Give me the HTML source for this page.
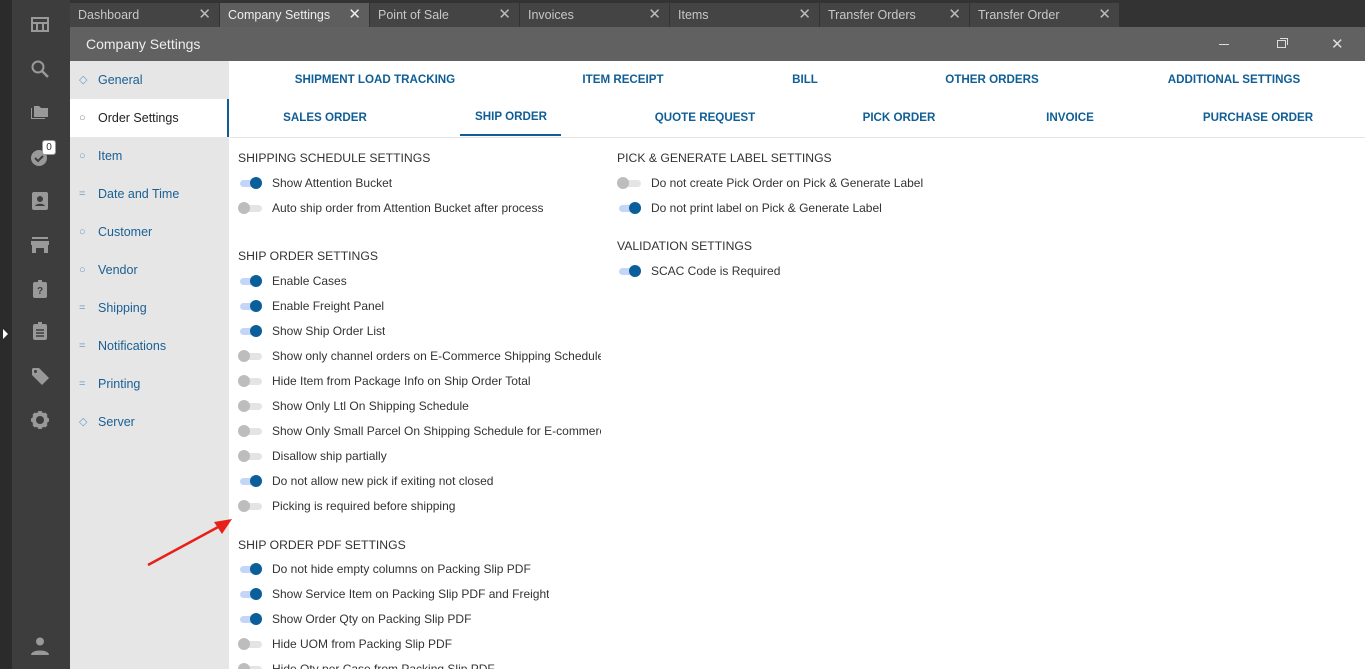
<!DOCTYPE html>
<html style="overflow:hidden"><head><meta charset="utf-8"><style>
*{margin:0;padding:0;box-sizing:border-box}
html,body{width:1365px;height:669px;overflow:hidden}
body{position:relative;background:#fff;font-family:"Liberation Sans",sans-serif}
.a{position:absolute}
.tab{position:absolute;top:3px;height:24px;width:149px;background:#444;color:#c8c8c8;font-size:12.5px;line-height:24px;padding-left:8px}
.tab .x{position:absolute;right:8px;top:0;font-size:15px;color:#bbb;font-weight:300}
.nav{position:absolute;left:70px;width:159px;height:38px;line-height:38px;font-size:12.5px;color:#1a5f93;padding-left:28px}
.nav i{position:absolute;left:9px;top:0;font-style:normal;color:#6a9cc6;font-size:11px}
.tb{position:absolute;font-size:11.6px;font-weight:bold;color:#0f5e96;transform:translateX(-50%);white-space:nowrap}
.h{position:absolute;font-size:12.2px;color:#333;white-space:nowrap}
.r{position:absolute;height:20px;font-size:12px;color:#333;white-space:nowrap;overflow:hidden;line-height:20px;padding-left:34px}
.r:before{content:"";position:absolute;left:2px;top:7px;width:22px;height:7px;border-radius:4px;background:#e4e4e4}
.r:after{content:"";position:absolute;left:0;top:4px;width:12px;height:12px;border-radius:50%;background:#bdbdbd}
.r.on:before{background:#c4d6f7}
.r.on:after{left:12px;background:#0a5e9a}
.ic{position:absolute;left:30px;width:20px;height:20px}
</style></head><body>
<div class="a" style="left:0;top:0;width:12px;height:669px;background:#2b2b2b"></div>
<div class="a" style="left:12px;top:0;width:58px;height:669px;background:#3d3d3d"></div>
<div class="a" style="left:70px;top:0;width:1295px;height:27px;background:#333"></div>
<div class="a" style="left:3px;top:329px;width:0;height:0;border-top:5px solid transparent;border-bottom:5px solid transparent;border-left:5px solid #fff"></div>
<svg class="ic" style="top:15px" viewBox="0 0 20 20"><rect x="2" y="3" width="16" height="13" fill="none" stroke="#999" stroke-width="2"/><rect x="2" y="7" width="16" height="2" fill="#999"/><rect x="6" y="9" width="2" height="6" fill="#999"/><rect x="12" y="9" width="2" height="6" fill="#999"/></svg>
<svg class="ic" style="top:59px" viewBox="0 0 20 20"><circle cx="8" cy="8" r="5.5" fill="none" stroke="#999" stroke-width="2"/><path d="M12 12l6 6" stroke="#999" stroke-width="2.5"/></svg>
<svg class="ic" style="top:103px" viewBox="0 0 20 20"><path d="M1 5v11h14v-1H2V5z" fill="#999"/><path d="M4 3h5l2 2h7v9H4z" fill="#999"/></svg>
<svg class="ic" style="top:147px" viewBox="0 0 20 20"><circle cx="9" cy="11" r="8" fill="#999"/><path d="M5 11l3 3 5-5" stroke="#3d3d3d" stroke-width="2" fill="none"/></svg>
<div class="a" style="left:42px;top:140px;width:14px;height:15px;background:#fff;border-radius:3px;border:1px solid #999;font-size:10px;line-height:13px;text-align:center;color:#333">0</div>
<svg class="ic" style="top:191px" viewBox="0 0 20 20"><rect x="2" y="1" width="16" height="18" rx="2" fill="#999"/><circle cx="10" cy="8" r="3" fill="#3d3d3d"/><path d="M5 15c1-3 9-3 10 0z" fill="#3d3d3d"/></svg>
<svg class="ic" style="top:235px" viewBox="0 0 20 20"><rect x="2" y="2" width="16" height="2" fill="#999"/><path d="M1 6h18v4H1z" fill="#999"/><path d="M2 10h16v8h-4v-5H6v5H2z" fill="#999"/></svg>
<svg class="ic" style="top:279px" viewBox="0 0 20 20"><rect x="3" y="3" width="14" height="16" rx="2" fill="#999"/><rect x="8" y="1" width="4" height="3" fill="#999"/><text x="10" y="15" font-size="10" font-weight="bold" fill="#3d3d3d" text-anchor="middle" font-family="Liberation Sans">?</text></svg>
<svg class="ic" style="top:321px" viewBox="0 0 20 20"><rect x="3" y="3" width="14" height="16" rx="2" fill="#999"/><rect x="8" y="1" width="4" height="3" fill="#999"/><path d="M6 9h8M6 12h8M6 15h8" stroke="#3d3d3d" stroke-width="1.5"/></svg>
<svg class="ic" style="top:366px" viewBox="0 0 20 20"><path d="M2 3v6l10 10 7-7L9 2H3z" fill="#999"/><circle cx="5.5" cy="5.5" r="1.5" fill="#3d3d3d"/></svg>
<svg class="ic" style="top:410px" viewBox="0 0 20 20"><circle cx="10" cy="10" r="6" fill="none" stroke="#999" stroke-width="4"/><path d="M10 1v4M10 15v4M1 10h4M15 10h4M3.6 3.6l3 3M13.4 13.4l3 3M3.6 16.4l3-3M13.4 6.6l3-3" stroke="#999" stroke-width="3.5"/><circle cx="10" cy="10" r="2" fill="#3d3d3d"/></svg>
<svg class="ic" style="top:636px" viewBox="0 0 20 20"><circle cx="10" cy="5.5" r="4" fill="#999"/><path d="M1 19c0-6 18-6 18 0z" fill="#999"/></svg>
<div class="tab" style="left:70px">Dashboard<span class="x">✕</span></div>
<div class="tab" style="left:220px;background:#5e5e5e;color:#eee">Company Settings<span class="x" style="color:#eee">✕</span></div>
<div class="tab" style="left:370px">Point of Sale<span class="x">✕</span></div>
<div class="tab" style="left:520px">Invoices<span class="x">✕</span></div>
<div class="tab" style="left:670px">Items<span class="x">✕</span></div>
<div class="tab" style="left:820px">Transfer Orders<span class="x">✕</span></div>
<div class="tab" style="left:970px">Transfer Order<span class="x">✕</span></div>
<div class="a" style="left:70px;top:27px;width:1295px;height:34px;background:#616161;color:#eee;font-size:14px;line-height:34px;padding-left:16px">Company Settings</div>
<div class="a" style="left:1219px;top:44px;width:10px;height:1px;background:#ddd"></div>
<div class="a" style="left:1277px;top:40px;width:9px;height:8px;border:1.5px solid #ddd"></div>
<div class="a" style="left:1280px;top:38px;width:8px;height:7px;border-top:1.5px solid #ddd;border-right:1.5px solid #ddd"></div>
<div class="a" style="left:1331px;top:35px;color:#ddd;font-size:15px">✕</div>
<div class="a" style="left:70px;top:61px;width:159px;height:608px;background:#e6e6e6"></div>
<div class="nav" style="top:61px"><i>◇</i>General</div>
<div class="nav" style="top:99px;background:#fff;color:#222;border-right:2px solid #0f5e96"><i style="color:#888">○</i>Order Settings</div>
<div class="nav" style="top:137px"><i>○</i>Item</div>
<div class="nav" style="top:175px"><i>=</i>Date and Time</div>
<div class="nav" style="top:213px"><i>○</i>Customer</div>
<div class="nav" style="top:251px"><i>○</i>Vendor</div>
<div class="nav" style="top:289px"><i>=</i>Shipping</div>
<div class="nav" style="top:327px"><i>=</i>Notifications</div>
<div class="nav" style="top:365px"><i>=</i>Printing</div>
<div class="nav" style="top:403px"><i>◇</i>Server</div>
<div class="tb" style="left:375px;top:73px">SHIPMENT LOAD TRACKING</div>
<div class="tb" style="left:623px;top:73px">ITEM RECEIPT</div>
<div class="tb" style="left:805px;top:73px">BILL</div>
<div class="tb" style="left:992px;top:73px">OTHER ORDERS</div>
<div class="tb" style="left:1234px;top:73px">ADDITIONAL SETTINGS</div>
<div class="tb" style="left:325px;top:111px">SALES ORDER</div>
<div class="tb" style="left:511px;top:110px">SHIP ORDER</div>
<div class="a" style="left:460px;top:134px;width:101px;height:2px;background:#0f5e96"></div>
<div class="tb" style="left:705px;top:111px">QUOTE REQUEST</div>
<div class="tb" style="left:899px;top:111px">PICK ORDER</div>
<div class="tb" style="left:1070px;top:111px">INVOICE</div>
<div class="tb" style="left:1258px;top:111px">PURCHASE ORDER</div>
<div class="a" style="left:230px;top:137px;width:1135px;height:1px;background:#e4e4e4"></div>
<div class="h" style="left:238px;top:151px">SHIPPING SCHEDULE SETTINGS</div>
<div class="r on" style="left:238px;top:173px">Show Attention Bucket</div>
<div class="r" style="left:238px;top:198px">Auto ship order from Attention Bucket after process</div>
<div class="h" style="left:238px;top:249px">SHIP ORDER SETTINGS</div>
<div class="r on" style="left:238px;top:271px">Enable Cases</div>
<div class="r on" style="left:238px;top:296px">Enable Freight Panel</div>
<div class="r on" style="left:238px;top:321px">Show Ship Order List</div>
<div class="r" style="left:238px;top:346px;width:363px">Show only channel orders on E-Commerce Shipping Schedule</div>
<div class="r" style="left:238px;top:371px">Hide Item from Package Info on Ship Order Total</div>
<div class="r" style="left:238px;top:396px">Show Only Ltl On Shipping Schedule</div>
<div class="r" style="left:238px;top:421px;width:363px">Show Only Small Parcel On Shipping Schedule for E-commerce</div>
<div class="r" style="left:238px;top:446px">Disallow ship partially</div>
<div class="r on" style="left:238px;top:471px">Do not allow new pick if exiting not closed</div>
<div class="r" style="left:238px;top:496px">Picking is required before shipping</div>
<div class="h" style="left:238px;top:538px">SHIP ORDER PDF SETTINGS</div>
<div class="r on" style="left:238px;top:559px">Do not hide empty columns on Packing Slip PDF</div>
<div class="r on" style="left:238px;top:584px">Show Service Item on Packing Slip PDF and Freight</div>
<div class="r on" style="left:238px;top:609px">Show Order Qty on Packing Slip PDF</div>
<div class="r" style="left:238px;top:634px">Hide UOM from Packing Slip PDF</div>
<div class="r" style="left:238px;top:659px;height:10px">Hide Qty per Case from Packing Slip PDF</div>
<div class="h" style="left:617px;top:151px">PICK &amp; GENERATE LABEL SETTINGS</div>
<div class="r" style="left:617px;top:173px">Do not create Pick Order on Pick &amp; Generate Label</div>
<div class="r on" style="left:617px;top:198px">Do not print label on Pick &amp; Generate Label</div>
<div class="h" style="left:617px;top:239px">VALIDATION SETTINGS</div>
<div class="r on" style="left:617px;top:261px">SCAC Code is Required</div>
<svg class="a" style="left:140px;top:510px" width="100" height="60" viewBox="0 0 100 60"><path d="M8 55L80 16" stroke="#e8201a" stroke-width="2.5"/><path d="M92 9L74 12 82 24z" fill="#e8201a"/></svg>
</body></html>
